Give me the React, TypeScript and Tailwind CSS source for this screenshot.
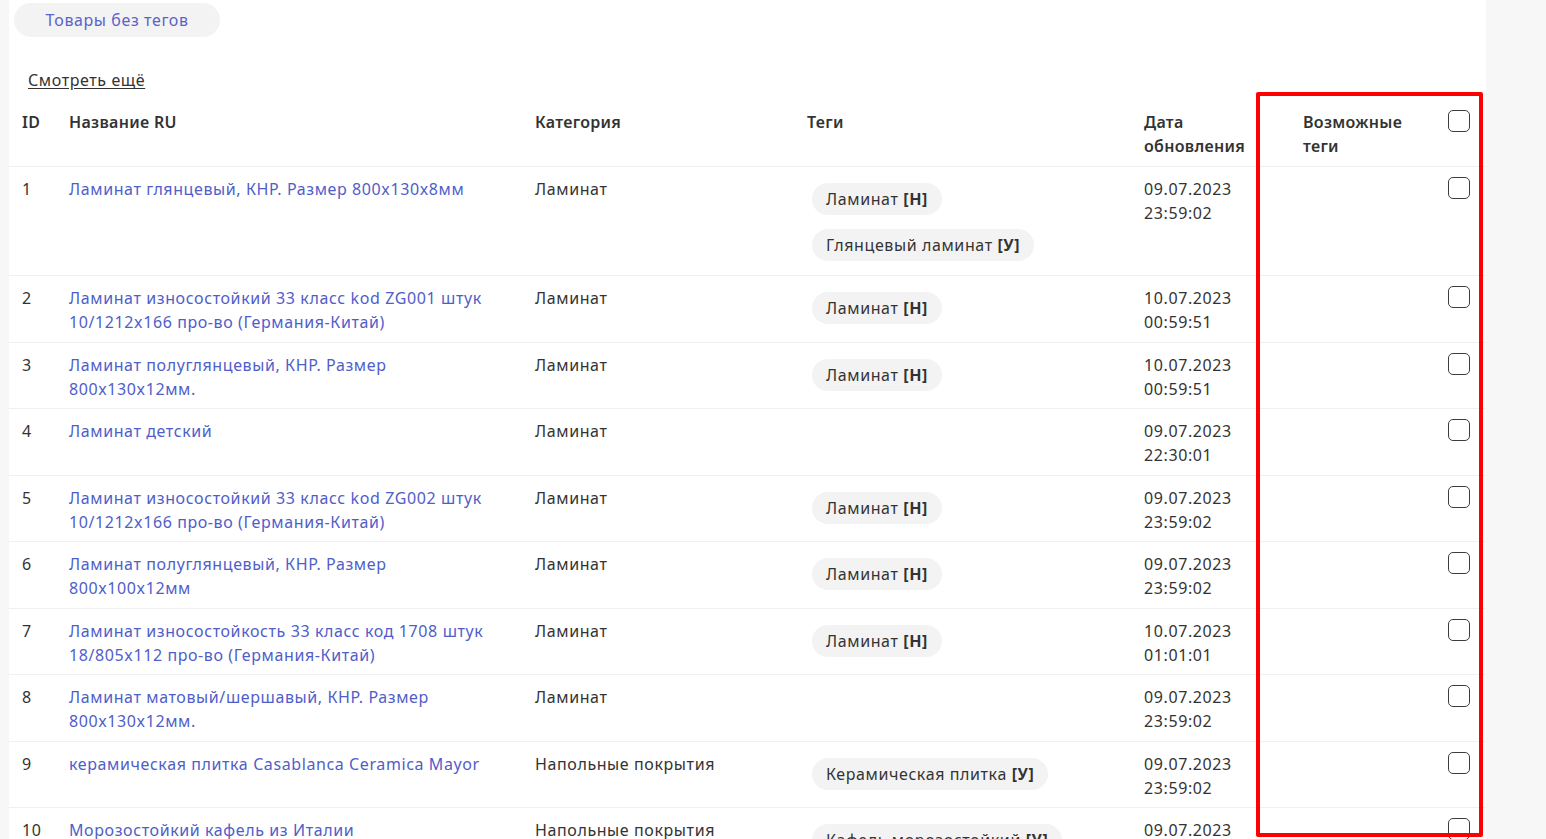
import React from "react"

type Tag = { name: string; mark: string }
type Row = {
  id: number
  name: string[]
  category: string
  tags: Tag[]
  date: string
  time: string
}

const H: Tag = { name: "Ламинат", mark: "[Н]" }

const ROWS: Row[] = [
  {
    id: 1,
    name: ["Ламинат глянцевый, КНР. Размер 800x130x8мм"],
    category: "Ламинат",
    tags: [H, { name: "Глянцевый ламинат", mark: "[У]" }],
    date: "09.07.2023",
    time: "23:59:02",
  },
  {
    id: 2,
    name: ["Ламинат износостойкий 33 класс kod ZG001 штук", "10/1212x166 про-во (Германия-Китай)"],
    category: "Ламинат",
    tags: [H],
    date: "10.07.2023",
    time: "00:59:51",
  },
  {
    id: 3,
    name: ["Ламинат полуглянцевый, КНР. Размер", "800x130x12мм."],
    category: "Ламинат",
    tags: [H],
    date: "10.07.2023",
    time: "00:59:51",
  },
  {
    id: 4,
    name: ["Ламинат детский"],
    category: "Ламинат",
    tags: [],
    date: "09.07.2023",
    time: "22:30:01",
  },
  {
    id: 5,
    name: ["Ламинат износостойкий 33 класс kod ZG002 штук", "10/1212x166 про-во (Германия-Китай)"],
    category: "Ламинат",
    tags: [H],
    date: "09.07.2023",
    time: "23:59:02",
  },
  {
    id: 6,
    name: ["Ламинат полуглянцевый, КНР. Размер", "800x100x12мм"],
    category: "Ламинат",
    tags: [H],
    date: "09.07.2023",
    time: "23:59:02",
  },
  {
    id: 7,
    name: ["Ламинат износостойкость 33 класс код 1708 штук", "18/805x112 про-во (Германия-Китай)"],
    category: "Ламинат",
    tags: [H],
    date: "10.07.2023",
    time: "01:01:01",
  },
  {
    id: 8,
    name: ["Ламинат матовый/шершавый, КНР. Размер", "800x130x12мм."],
    category: "Ламинат",
    tags: [],
    date: "09.07.2023",
    time: "23:59:02",
  },
  {
    id: 9,
    name: ["керамическая плитка Casablanca Ceramica Mayor"],
    category: "Напольные покрытия",
    tags: [{ name: "Керамическая плитка", mark: "[У]" }],
    date: "09.07.2023",
    time: "23:59:02",
  },
  {
    id: 10,
    name: ["Морозостойкий кафель из Италии"],
    category: "Напольные покрытия",
    tags: [{ name: "Кафель морозостойкий", mark: "[У]" }],
    date: "09.07.2023",
    time: "23:59:02",
  },
]

function Checkbox() {
  return (
    <span className="block h-[22px] w-[22px] rounded-[5px] border-[1.5px] border-[#3a3d42] bg-white" />
  )
}

function TagPill({ tag }: { tag: Tag }) {
  return (
    <span className="inline-flex h-[32px] items-center self-start rounded-full bg-[#f3f3f3] px-[14px] text-[#333]">
      {tag.name}&nbsp;<b className="font-bold">{tag.mark}</b>
    </span>
  )
}

const cell = "pl-[13px] pt-[10px] pb-[7.5px] align-top"
const head = "pl-[13px] pt-[10px] pb-[8px] align-top font-semibold tracking-[0.3px]"

export default function App() {
  return (
    <div
      className="relative min-h-screen bg-[#f7f7f7] pl-[9px] text-[16px] leading-[24px] tracking-[0.6px] text-[#333]"
      style={{ fontFamily: "'Noto Sans', 'Open Sans', sans-serif" }}
    >
      <div className="w-[1477px] bg-white pt-[3px]">
        <button className="ml-[5px] h-[34px] w-[206px] rounded-full bg-[#f3f3f3] text-[16px] tracking-[0.6px] text-[#5a63c9]">
          Товары без тегов
        </button>
        <div className="mt-[31px] pl-[19px]">
          <a href="#" className="text-[#333] underline underline-offset-2">
            Смотреть ещё
          </a>
        </div>

        <table className="mt-[8px] w-full table-fixed border-collapse">
          <colgroup>
            <col className="w-[47px]" />
            <col className="w-[466px]" />
            <col className="w-[272px]" />
            <col className="w-[337px]" />
            <col className="w-[159px]" />
            <col className="w-[145px]" />
            <col className="w-[51px]" />
          </colgroup>
          <thead>
            <tr className="border-b border-[#f0f0f0] text-left">
              <th className={head}>ID</th>
              <th className={head}>Название RU</th>
              <th className={head}>Категория</th>
              <th className={head}>Теги</th>
              <th className={head}>
                Дата
                <br />
                обновления
              </th>
              <th className={head}>
                Возможные
                <br />
                теги
              </th>
              <th className="pl-[13px] pt-[10px] pb-[8px] align-top">
                <Checkbox />
              </th>
            </tr>
          </thead>
          <tbody>
            {ROWS.map((r) => (
              <tr key={r.id} className="border-b border-[#f0f0f0]">
                <td className={cell}>{r.id}</td>
                <td className={cell}>
                  <a href="#" className="text-[#4f5ec9]">
                    {r.name.map((line, i) => (
                      <React.Fragment key={i}>
                        {i > 0 && <br />}
                        {line}
                      </React.Fragment>
                    ))}
                  </a>
                </td>
                <td className={cell}>{r.category}</td>
                <td className="pl-[18px] pt-[16px] pb-[14px] align-top">
                  <div className="flex flex-col gap-[14px]">
                    {r.tags.map((t) => (
                      <TagPill key={t.name} tag={t} />
                    ))}
                  </div>
                </td>
                <td className={cell}>
                  {r.date}
                  <br />
                  {r.time}
                </td>
                <td className={cell}></td>
                <td className={cell}>
                  <Checkbox />
                </td>
              </tr>
            ))}
          </tbody>
        </table>
      </div>

      {/* annotation frame over the "possible tags" column */}
      <div className="pointer-events-none absolute left-[1256px] top-[92px] h-[745px] w-[227px] rounded-[2px] border-4 border-[#ff0000]" />
    </div>
  )
}
